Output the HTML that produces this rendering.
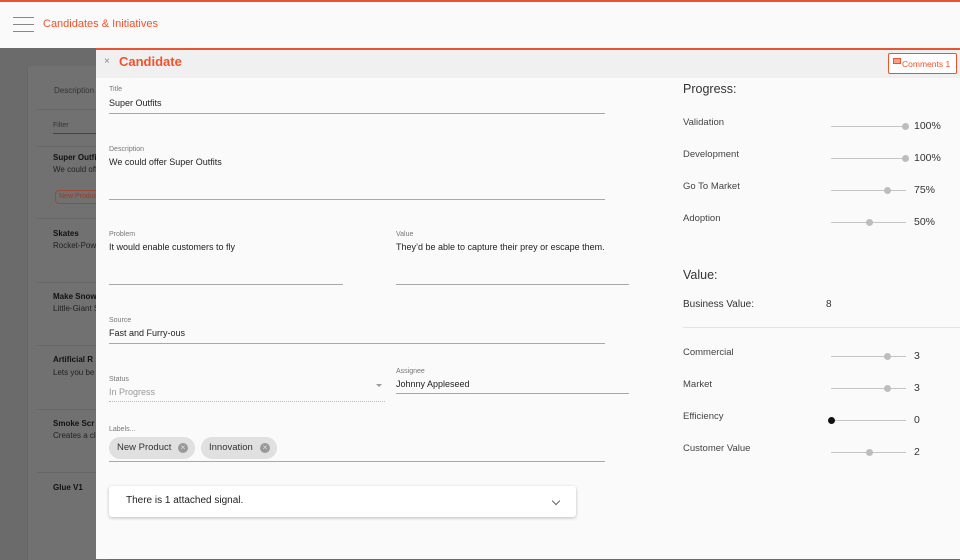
<!DOCTYPE html>
<html><head><style>
*{margin:0;padding:0;box-sizing:border-box}
body{width:960px;height:559px;overflow:hidden;position:relative;background:#6b6b6b;font-family:"Liberation Sans",sans-serif;color:#222}
.a{position:absolute;white-space:nowrap}
.lbl{font-size:7px;color:#777}
.t{font-size:9px;color:#222}
.ln{position:absolute;height:1px;background:#a8a8a8}
.sl{position:absolute;height:1px;background:#c4c4c4;width:75px;left:831px}
.th{position:absolute;width:7px;height:7px;border-radius:50%;background:#bdbdbd}
.pl{font-size:9.5px;color:#444}
.pv{font-size:10.5px;color:#333}
</style></head><body>
<div class="a" style="left:0;top:0;width:960px;height:48px;background:#fafafa;border-top:2px solid #e8542f"></div>
<div class="a" style="left:13px;top:17px;width:21px;height:1px;background:#888"></div>
<div class="a" style="left:13px;top:24px;width:21px;height:1px;background:#888"></div>
<div class="a" style="left:13px;top:31px;width:21px;height:1px;background:#888"></div>
<div class="a" style="left:43px;top:18px;font-size:11px;color:#f0522c">Candidates &amp; Initiatives</div>

<!-- background card -->
<div class="a" style="left:27px;top:66px;width:80px;height:494px;background:#717171;border-left:1px solid #666"></div>
<div class="a" style="left:54px;top:86px;font-size:8px;color:#333">Description</div>
<div class="a" style="left:37px;top:109px;width:70px;height:1px;background:#666"></div>
<div class="a" style="left:53px;top:122px;font-size:7px;color:#333">Filter</div>
<div class="a" style="left:53px;top:133px;width:50px;height:1px;background:#444"></div>
<div class="a" style="left:37px;top:146px;width:70px;height:1px;background:#666"></div>
<div class="a" style="left:53px;top:153px;font-size:8px;font-weight:bold;color:#111">Super Outfits</div>
<div class="a" style="left:53px;top:165px;font-size:8px;color:#222">We could offer</div>
<div class="a" style="left:55px;top:190px;width:50px;height:14px;border:1px solid #9a4a38;border-radius:4px;font-size:7px;color:#9a3a28;padding:2px 3px">New Product</div>
<div class="a" style="left:37px;top:218px;width:70px;height:1px;background:#666"></div>
<div class="a" style="left:53px;top:229px;font-size:8px;font-weight:bold;color:#111">Skates</div>
<div class="a" style="left:53px;top:241px;font-size:8px;color:#222">Rocket-Powered</div>
<div class="a" style="left:37px;top:282px;width:70px;height:1px;background:#666"></div>
<div class="a" style="left:53px;top:292px;font-size:8px;font-weight:bold;color:#111">Make Snow</div>
<div class="a" style="left:53px;top:304px;font-size:8px;color:#222">Little-Giant S</div>
<div class="a" style="left:37px;top:345px;width:70px;height:1px;background:#666"></div>
<div class="a" style="left:53px;top:355px;font-size:8px;font-weight:bold;color:#111">Artificial R</div>
<div class="a" style="left:53px;top:368px;font-size:8px;color:#222">Lets you be</div>
<div class="a" style="left:37px;top:409px;width:70px;height:1px;background:#666"></div>
<div class="a" style="left:53px;top:419px;font-size:8px;font-weight:bold;color:#111">Smoke Scr</div>
<div class="a" style="left:53px;top:431px;font-size:8px;color:#222">Creates a cl</div>
<div class="a" style="left:37px;top:472px;width:70px;height:1px;background:#666"></div>
<div class="a" style="left:53px;top:483px;font-size:8px;font-weight:bold;color:#111">Glue V1</div>

<!-- panel -->
<div class="a" style="left:96px;top:48px;width:864px;height:511px;background:#fafafa;border-top:2px solid #e8542f"></div>
<div class="a" style="left:96px;top:50px;width:864px;height:28px;background:#f0f0f0"></div>
<div class="a" style="left:104px;top:56px;font-size:10px;color:#888">×</div>
<div class="a" style="left:119px;top:54px;font-size:13px;font-weight:bold;color:#f0522c">Candidate</div>
<div class="a" style="left:888px;top:53px;width:69px;height:21px;border:1px solid #f0522c;border-radius:2px;background:#fff"></div>
<div class="a" style="left:893px;top:58px;width:8px;height:6px;border:1.5px solid #f0522c;background:#f8a08a"></div>
<div class="a" style="left:902px;top:59px;font-size:8.5px;color:#f0522c">Comments 1</div>

<div class="a lbl" style="left:109px;top:86px">Title</div>
<div class="a t" style="left:109px;top:98px">Super Outfits</div>
<div class="ln" style="left:109px;top:113px;width:496px"></div>
<div class="a lbl" style="left:109px;top:146px">Description</div>
<div class="a t" style="left:109px;top:157px">We could offer Super Outfits</div>
<div class="ln" style="left:109px;top:199px;width:496px"></div>
<div class="a lbl" style="left:109px;top:231px">Problem</div>
<div class="a t" style="left:109px;top:242px">It would enable customers to fly</div>
<div class="ln" style="left:109px;top:284px;width:234px"></div>
<div class="a lbl" style="left:396px;top:231px">Value</div>
<div class="a t" style="left:396px;top:242px">They’d be able to capture their prey or escape them.</div>
<div class="ln" style="left:396px;top:284px;width:233px"></div>
<div class="a lbl" style="left:109px;top:317px">Source</div>
<div class="a t" style="left:109px;top:328px">Fast and Furry-ous</div>
<div class="ln" style="left:109px;top:343px;width:496px"></div>
<div class="a lbl" style="left:109px;top:376px">Status</div>
<div class="a t" style="left:109px;top:387px;color:#999">In Progress</div>
<div class="a" style="left:376px;top:384px;width:0;height:0;border-left:3px solid transparent;border-right:3px solid transparent;border-top:3px solid #999"></div>
<div class="a" style="left:109px;top:401px;width:276px;border-top:1px dotted #bbb"></div>
<div class="a lbl" style="left:396px;top:368px">Assignee</div>
<div class="a t" style="left:396px;top:379px">Johnny Appleseed</div>
<div class="ln" style="left:396px;top:393px;width:233px"></div>
<div class="a lbl" style="left:109px;top:426px">Labels...</div>
<div class="a" style="left:109px;top:437px;width:86px;height:22px;border-radius:11px;background:#e0e0e0;font-size:9.5px;color:#333;padding:5px 8px">New Product</div>
<div class="a" style="left:178px;top:443px;width:10px;height:10px;border-radius:50%;background:#999;color:#e0e0e0;font-size:8px;line-height:10px;text-align:center">×</div>
<div class="a" style="left:201px;top:437px;width:76px;height:22px;border-radius:11px;background:#e0e0e0;font-size:9.5px;color:#333;padding:5px 8px">Innovation</div>
<div class="a" style="left:260px;top:443px;width:10px;height:10px;border-radius:50%;background:#999;color:#e0e0e0;font-size:8px;line-height:10px;text-align:center">×</div>
<div class="ln" style="left:109px;top:461px;width:496px"></div>
<div class="a" style="left:109px;top:486px;width:467px;height:31px;background:#fff;border-radius:3px;box-shadow:0 1px 3px rgba(0,0,0,.25)"></div>
<div class="a" style="left:126px;top:495px;font-size:10px;color:#222">There is 1 attached signal.</div>
<div class="a" style="left:553px;top:498px;width:6px;height:6px;border-right:1px solid #666;border-bottom:1px solid #666;transform:rotate(45deg)"></div>

<!-- right -->
<div class="a" style="left:683px;top:82px;font-size:12.5px;color:#333">Progress:</div>
<div class="a pl" style="left:683px;top:117px">Validation</div>
<div class="sl" style="top:126px"></div><div class="th" style="left:902px;top:123px"></div>
<div class="a pv" style="left:914px;top:120px">100%</div>
<div class="a pl" style="left:683px;top:149px">Development</div>
<div class="sl" style="top:158px"></div><div class="th" style="left:902px;top:155px"></div>
<div class="a pv" style="left:914px;top:152px">100%</div>
<div class="a pl" style="left:683px;top:181px">Go To Market</div>
<div class="sl" style="top:190px"></div><div class="th" style="left:884px;top:187px"></div>
<div class="a pv" style="left:914px;top:184px">75%</div>
<div class="a pl" style="left:683px;top:213px">Adoption</div>
<div class="sl" style="top:222px"></div><div class="th" style="left:866px;top:219px"></div>
<div class="a pv" style="left:914px;top:216px">50%</div>

<div class="a" style="left:683px;top:268px;font-size:12.5px;color:#333">Value:</div>
<div class="a" style="left:683px;top:299px;font-size:10px;color:#333">Business Value:</div>
<div class="a" style="left:826px;top:299px;font-size:10px;color:#333">8</div>
<div class="a" style="left:683px;top:327px;width:277px;height:1px;background:#e4e4e4"></div>
<div class="a pl" style="left:683px;top:347px">Commercial</div>
<div class="sl" style="top:356px"></div><div class="th" style="left:884px;top:353px"></div>
<div class="a pv" style="left:914px;top:350px">3</div>
<div class="a pl" style="left:683px;top:379px">Market</div>
<div class="sl" style="top:388px"></div><div class="th" style="left:884px;top:385px"></div>
<div class="a pv" style="left:914px;top:382px">3</div>
<div class="a pl" style="left:683px;top:411px">Efficiency</div>
<div class="sl" style="top:420px"></div><div class="th" style="left:828px;top:417px;background:#111"></div>
<div class="a pv" style="left:914px;top:414px">0</div>
<div class="a pl" style="left:683px;top:443px">Customer Value</div>
<div class="sl" style="top:452px"></div><div class="th" style="left:866px;top:449px"></div>
<div class="a pv" style="left:914px;top:446px">2</div>
</body></html>
